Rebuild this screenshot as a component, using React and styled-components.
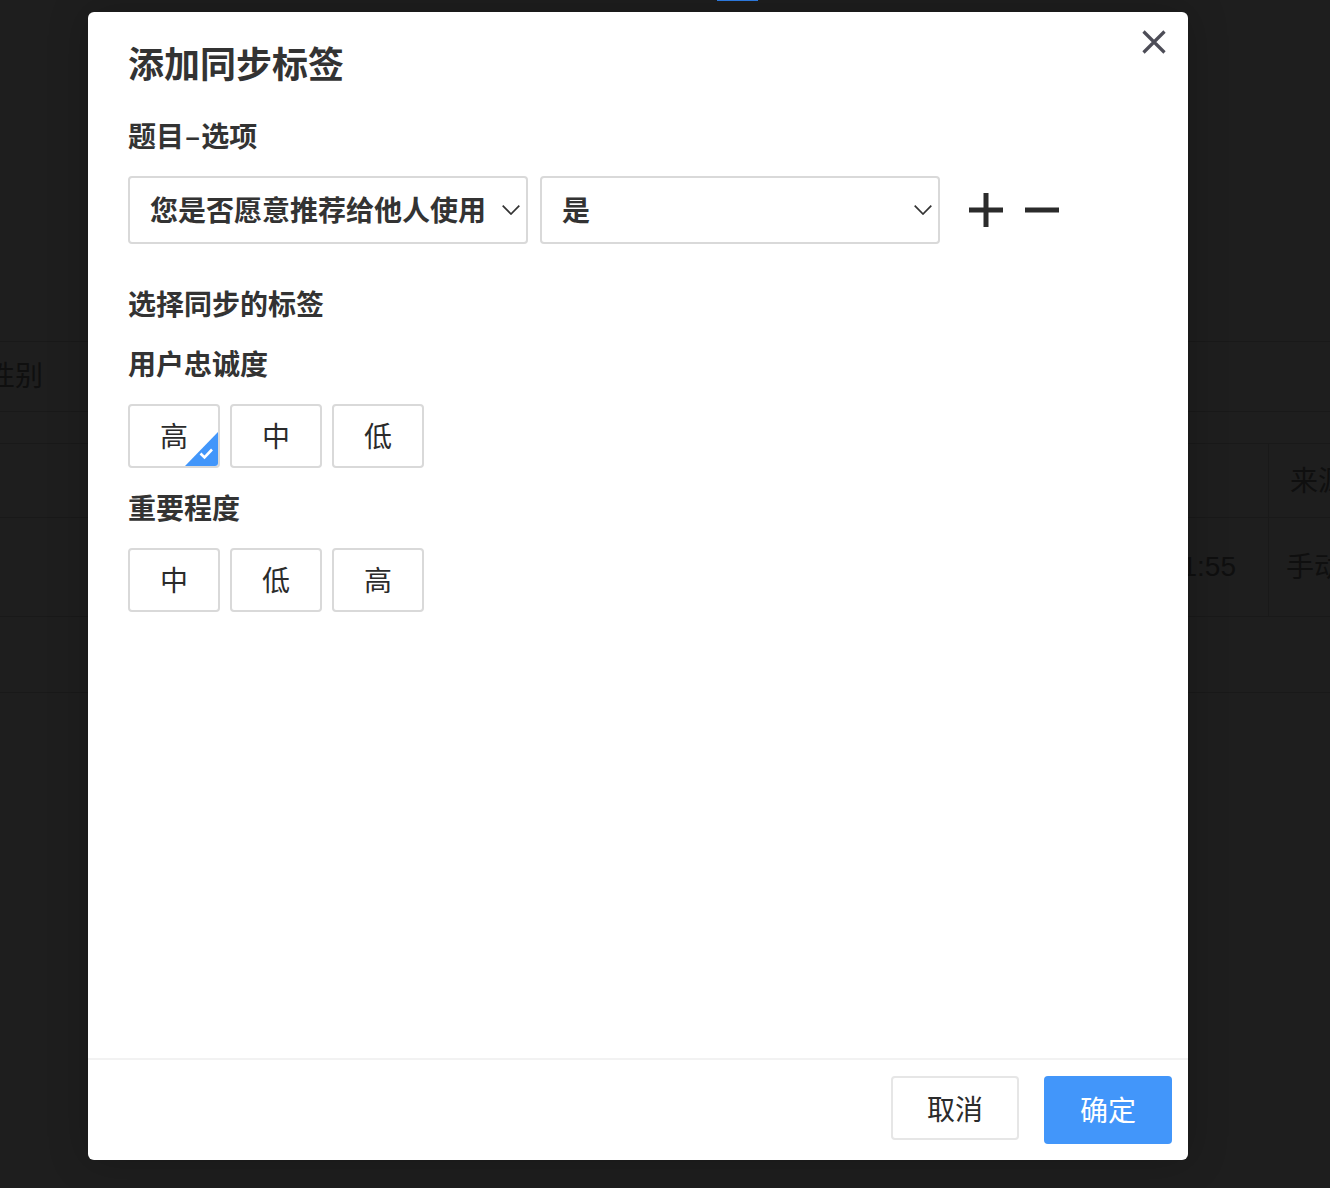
import React from "react";
import styled, { createGlobalStyle } from "styled-components";

const Global = createGlobalStyle`
  html, body { margin: 0; padding: 0; background: #1e1e1e; }
  * { box-sizing: border-box; }
  body { font-family: "Noto Sans CJK SC", "Liberation Sans", sans-serif; color: #2b2b2b; }
`;

const Page = styled.div`
  position: relative;
  width: 1330px;
  height: 1188px;
  overflow: hidden;
  background: #1e1e1e;
`;

const TabMark = styled.div`
  width: 41px;
  height: 1px;
  margin-left: 717px;
  background: #2f7fe8;
`;

const FilterRow = styled.div`
  height: 71px;
  margin-top: 340px;
  display: flex;
  align-items: center;
  padding-bottom: 5px;
  border-top: 1px solid #191919;
  border-bottom: 1px solid #191919;
  overflow: hidden;
`;

const BackText = styled.span`
  font-size: 28px;
  color: #0f0f0f;
  white-space: nowrap;
`;

const FilterText = styled(BackText)`
  margin-left: -13px;
`;

const BackTable = styled.div`
  margin-top: 31px;
  border-top: 1px solid #191919;
`;

const BackRow = styled.div`
  display: grid;
  grid-template-columns: 1268px 1fr;
  height: ${(p) => p.$h}px;
  border-bottom: 1px solid #191919;
`;

const BackCell = styled.div`
  display: flex;
  align-items: center;
  justify-content: ${(p) => (p.$end ? "flex-end" : "flex-start")};
  padding: ${(p) => p.$pad};
  overflow: hidden;
  & + & { border-left: 1px solid #191919; }
`;

const NumText = styled(BackText)`
  font-family: "Liberation Sans", sans-serif;
`;

const Modal = styled.div`
  position: absolute;
  left: 88px;
  top: 12px;
  width: 1100px;
  height: 1148px;
  display: flex;
  flex-direction: column;
  background: #fff;
  border-radius: 6px;
  box-shadow: 0 0 40px rgba(0, 0, 0, 0.22);
`;

const Close = styled.button`
  position: absolute;
  top: 16px;
  right: 20px;
  width: 28px;
  height: 28px;
  padding: 0;
  border: 0;
  background: none;
  display: flex;
  align-items: center;
  justify-content: center;
`;

const Body = styled.div`
  flex: 1;
  padding: 25px 40px 0;
`;

const Title = styled.h2`
  margin: 0 0 29px;
  font-size: 36px;
  line-height: 50px;
  font-weight: 700;
  color: #333;
`;

const Label = styled.div`
  font-size: 28px;
  line-height: 38px;
  font-weight: 700;
  color: #333;
  margin-bottom: 22px;
`;

const Dash = styled.span`
  padding: 0 1px;
`;

const SelectRow = styled.div`
  display: flex;
  align-items: center;
  gap: 12px;
  margin-bottom: 40px;
`;

const Select = styled.div`
  width: 400px;
  height: 68px;
  display: flex;
  align-items: center;
  justify-content: space-between;
  padding: 0 6px 0 20px;
  border: 2px solid #d9d9d9;
  border-radius: 4px;
  font-size: 28px;
  font-weight: 700;
  color: #333;
  background: #fff;
`;

const SelectText = styled.span`
  margin-bottom: 2px;
`;

const IconActions = styled.div`
  display: flex;
  align-items: center;
  gap: 22px;
  margin-left: 17px;
`;

const TagRow = styled.div`
  display: flex;
  gap: 10px;
  margin-bottom: 20px;
`;

const Tag = styled.div`
  position: relative;
  width: 92px;
  height: 64px;
  display: flex;
  align-items: center;
  justify-content: center;
  padding-bottom: 2px;
  border: 2px solid #d9d9d9;
  border-radius: 4px;
  font-size: 28px;
  color: #2b2b2b;
  background: #fff;
`;

const Corner = styled.svg`
  position: absolute;
  right: 0;
  bottom: 0;
  width: 33px;
  height: 34px;
`;

const Footer = styled.div`
  display: flex;
  justify-content: flex-end;
  align-items: flex-start;
  gap: 25px;
  height: 102px;
  padding: 16px 16px 0;
  border-top: 2px solid #f2f2f2;
`;

const CancelBtn = styled.button`
  width: 128px;
  height: 64px;
  padding: 0;
  border: 2px solid #e6e6e6;
  border-radius: 4px;
  background: #fff;
  color: #2b2b2b;
  font: 400 28px "Noto Sans CJK SC", sans-serif;
`;

const OkBtn = styled.button`
  width: 128px;
  height: 68px;
  padding: 0 0 2px;
  border: 0;
  border-radius: 4px;
  background: #4296fa;
  color: #fff;
  font: 400 28px "Noto Sans CJK SC", sans-serif;
`;

const Chevron = () => (
  <svg width="18" height="10" viewBox="0 0 18 10" fill="none">
    <path d="M0.7 0.7 L9 9 L17.3 0.7" stroke="#333" strokeWidth="1.7" />
  </svg>
);

const groups = [
  { name: "用户忠诚度", opts: ["高", "中", "低"], checked: 0 },
  { name: "重要程度", opts: ["中", "低", "高"], checked: -1 },
];

export default function App() {
  return (
    <Page>
      <Global />
      <TabMark />
      <FilterRow>
        <FilterText>性别</FilterText>
      </FilterRow>
      <BackTable>
        <BackRow $h={74}>
          <BackCell />
          <BackCell $pad="0 0 4px 21px">
            <BackText>来源</BackText>
          </BackCell>
        </BackRow>
        <BackRow $h={99}>
          <BackCell $end $pad="0 32px 0 0">
            <NumText>11:11:55</NumText>
          </BackCell>
          <BackCell $pad="0 0 4px 17px">
            <BackText>手动添加</BackText>
          </BackCell>
        </BackRow>
        <BackRow $h={76} />
      </BackTable>
      <Modal>
        <Close aria-label="关闭">
          <svg width="26" height="26" viewBox="0 0 26 26" fill="none">
            <path d="M2.5 2.5 L23.5 23.5 M23.5 2.5 L2.5 23.5" stroke="#4d4d57" strokeWidth="3.2" />
          </svg>
        </Close>
        <Body>
          <Title>添加同步标签</Title>
          <Label>题目<Dash>–</Dash>选项</Label>
          <SelectRow>
            <Select>
              <SelectText>您是否愿意推荐给他人使用</SelectText>
              <Chevron />
            </Select>
            <Select>
              <SelectText>是</SelectText>
              <Chevron />
            </Select>
            <IconActions>
              <svg width="34" height="34" viewBox="0 0 34 34" fill="none">
                <path d="M0 17 H34 M17 0 V34" stroke="#2b2b2b" strokeWidth="5" />
              </svg>
              <svg width="34" height="34" viewBox="0 0 34 34" fill="none">
                <path d="M0 17 H34" stroke="#2b2b2b" strokeWidth="5" />
              </svg>
            </IconActions>
          </SelectRow>
          <Label>选择同步的标签</Label>
          {groups.map((g) => (
            <React.Fragment key={g.name}>
              <Label>{g.name}</Label>
              <TagRow>
                {g.opts.map((o, i) => (
                  <Tag key={o}>
                    {o}
                    {i === g.checked && (
                      <Corner viewBox="0 0 33 34">
                        <path d="M33 0 V31 Q33 34 30 34 H0 Z" fill="#4296fa" />
                        <path d="M15.5 21.5 L19.5 25.5 L27 17.5" fill="none" stroke="#fff" strokeWidth="2.6" />
                      </Corner>
                    )}
                  </Tag>
                ))}
              </TagRow>
            </React.Fragment>
          ))}
        </Body>
        <Footer>
          <CancelBtn>取消</CancelBtn>
          <OkBtn>确定</OkBtn>
        </Footer>
      </Modal>
    </Page>
  );
}
